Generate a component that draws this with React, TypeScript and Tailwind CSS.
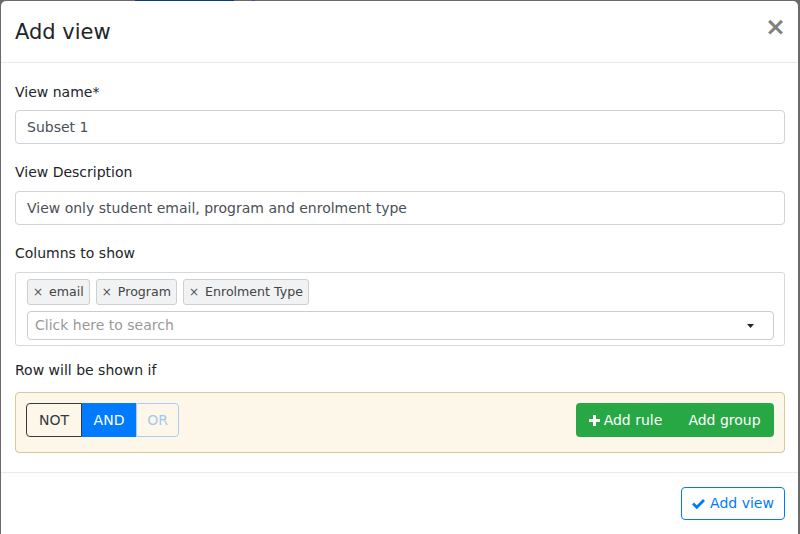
import React from "react";

const font = { fontFamily: '"DejaVu Sans", "Liberation Sans", sans-serif' };

function Chip({ label }: { label: string }) {
  return (
    <div className="h-[26px] flex items-center pl-[5px] pr-[5px] gap-[6px] rounded-[3px] border border-[#cfcfcf] bg-[#f1f2f4] text-[12.6px] text-[#444]">
      <span className="text-[12px] text-[#555]">×</span>
      <span>{label}</span>
    </div>
  );
}

export default function App() {
  return (
    <div className="w-[800px] h-[534px] bg-[#6a6a6a] overflow-hidden" style={font}>
      <div className="h-px flex">
        <div className="w-[135px]" />
        <div className="w-[99px] bg-[#0b3c7d]" />
        <div className="w-[18px]" />
        <div className="w-[3px] bg-[#2a5a99]" />
      </div>
      <div className="ml-px w-[797px] h-[533px] bg-white rounded-t-[5px] flex flex-col text-[#212529]">
        {/* header */}
        <div className="h-[62px] flex items-center justify-between pl-[14px] pr-[12px] border-b border-[#e9ecef] shrink-0">
          <div className="text-[21px] leading-[30px] mt-[1px]">Add view</div>
          <div className="text-[25px] font-bold text-[#808080] leading-none -mt-[10px]">×</div>
        </div>
        {/* body */}
        <div className="pt-[19px] pl-[14px] pr-[13px] text-[14px]">
          <div className="h-[21px] leading-[21px] mb-[7px]">View name*</div>
          <div className="h-[34px] border border-[#ced4da] rounded-[4px] flex items-center px-[11px] text-[#495057]">Subset 1</div>
          <div className="h-[21px] leading-[21px] mt-[18px] mb-[8px]">View Description</div>
          <div className="h-[34px] border border-[#ced4da] rounded-[4px] flex items-center px-[11px] text-[#495057]">
            View only student email, program and enrolment type
          </div>
          <div className="h-[21px] leading-[21px] mt-[18px] mb-[8px]">Columns to show</div>
          <div className="border border-[#d9d9d9] rounded-[3px] pl-[11px] pr-[10px] pt-[6px] pb-[5px] flex flex-col gap-[6px]">
            <div className="flex gap-[6px]">
              <Chip label="email" />
              <Chip label="Program" />
              <Chip label="Enrolment Type" />
            </div>
            <div className="h-[29px] border border-[#ccc] rounded-[4px] flex items-center justify-between pl-[7px] pr-[19px]">
              <span className="text-[#999]">Click here to search</span>
              <svg width="7" height="4" viewBox="0 0 7 4">
                <path d="M0 0 L7 0 L3.5 4 Z" fill="#222" />
              </svg>
            </div>
          </div>
          <div className="h-[21px] leading-[21px] mt-[14px] mb-[11px]">Row will be shown if</div>
          <div className="border border-[#dcc896] bg-[#fcf7e9] rounded-[4px] pt-[10px] pb-[15px] pl-[10px] pr-[10px] flex justify-between">
            <div className="flex h-[34px]">
              <div className="w-[56px] border border-[#343a40] rounded-l-[4px] flex items-center justify-center text-[#343a40]">NOT</div>
              <div className="w-[54px] bg-[#007bff] flex items-center justify-center text-white">AND</div>
              <div className="w-[43px] border border-[#a9cdf4] rounded-r-[4px] flex items-center justify-center text-[#a3c9f2]">OR</div>
            </div>
            <div className="flex h-[34px] bg-[#28a745] rounded-[4px] text-white">
              <div className="w-[99px] flex items-center justify-center gap-[4px]">
                <svg width="11" height="11" viewBox="0 0 11 11">
                  <path d="M4 0 H7 V4 H11 V7 H7 V11 H4 V7 H0 V4 H4 Z" fill="white" />
                </svg>
                <span>Add rule</span>
              </div>
              <div className="w-[99px] flex items-center justify-center">Add group</div>
            </div>
          </div>
        </div>
        {/* footer */}
        <div className="mt-[19px] border-t border-[#e9ecef] pt-[14px] pr-[13px] flex justify-end">
          <div className="h-[33px] w-[104px] border border-[#007bff] rounded-[4px] text-[#007bff] text-[14px] flex items-center justify-center gap-[5px]">
            <svg width="13" height="11" viewBox="0 0 13 11">
              <path d="M1 5.5 L4.8 9.3 L12 2" stroke="#007bff" strokeWidth="2.8" fill="none" />
            </svg>
            <span>Add view</span>
          </div>
        </div>
      </div>
    </div>
  );
}
